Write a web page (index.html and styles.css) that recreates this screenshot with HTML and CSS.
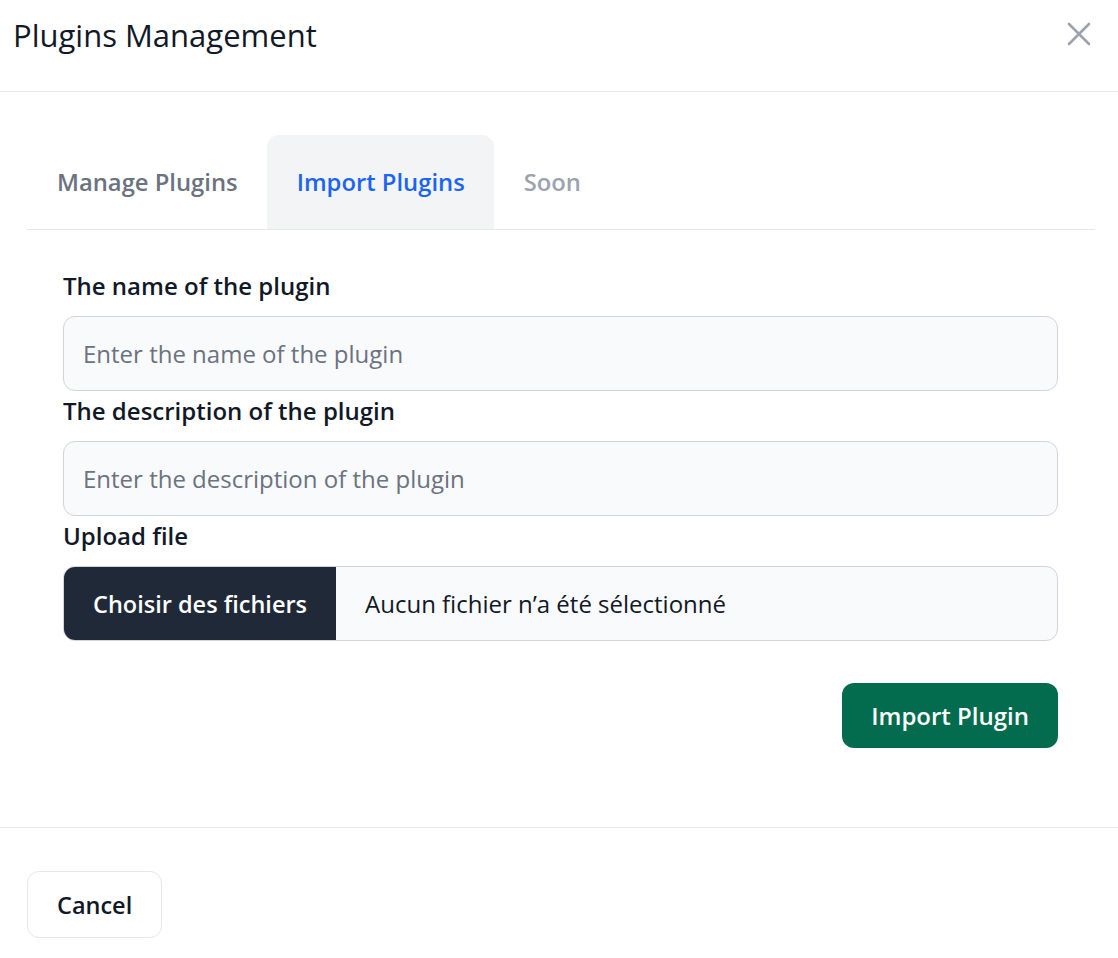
FILE: index.html
```html
<!DOCTYPE html>
<html lang="en">
<head>
<meta charset="utf-8">
<title>Plugins Management</title>
<link rel="stylesheet" href="styles.css">
</head>
<body>
<div class="modal">
  <div class="modal-header">
    <h3 class="modal-title">Plugins Management</h3>
    <button class="close-btn" type="button" aria-label="Close">
      <svg width="24" height="24" viewBox="0 0 24 24" fill="none" stroke="currentColor" stroke-width="2.6" stroke-linecap="round"><path d="M2 2 L22 22 M22 2 L2 22"/></svg>
    </button>
  </div>
  <div class="modal-body">
    <ul class="tabs">
      <li class="tab">Manage Plugins</li>
      <li class="tab active">Import Plugins</li>
      <li class="tab disabled">Soon</li>
    </ul>
    <form class="form">
      <label class="label">The name of the plugin</label>
      <input class="input" type="text" placeholder="Enter the name of the plugin">
      <label class="label">The description of the plugin</label>
      <input class="input" type="text" placeholder="Enter the description of the plugin">
      <label class="label">Upload file</label>
      <div class="file-input">
        <span class="file-btn">Choisir des fichiers</span>
        <span class="file-name">Aucun fichier n’a été sélectionné</span>
      </div>
      <div class="actions">
        <button class="btn-primary" type="button">Import Plugin</button>
      </div>
    </form>
  </div>
  <div class="modal-footer">
    <button class="btn-cancel" type="button">Cancel</button>
  </div>
</div>
</body>
</html>
```
FILE: styles.css
```css
* { box-sizing: border-box; }
html, body { margin: 0; padding: 0; background: #ffffff; }
body {
  font-family: "Open Sans", "Noto Sans", sans-serif;
  color: #111827;
}
.modal { width: 1118px; }
.modal-header {
  height: 92px;
  border-bottom: 1px solid #e5e7eb;
  display: flex;
  justify-content: space-between;
  align-items: flex-start;
  padding: 14px 27px 0 13px;
}
.modal-title {
  margin: 0;
  font-size: 31px;
  font-weight: 400;
  line-height: 42px;
  color: #111827;
}
.close-btn {
  background: none;
  border: none;
  padding: 0;
  margin-top: 8px;
  width: 24px;
  height: 24px;
  color: #9ca3af;
  display: flex;
}
.modal-body {
  padding: 43px 23px 0 27px;
}
.tabs {
  list-style: none;
  margin: 0;
  padding: 0;
  display: flex;
  border-bottom: 1px solid #e5e7eb;
}
.tab {
  height: 94px;
  padding: 0 29px 0 30px;
  display: flex;
  align-items: center;
  font-size: 23.8px;
  font-weight: 600;
  color: #6b7280;
  border-radius: 12px 12px 0 0;
}
.tab.active {
  background: #f3f4f6;
  color: #1c64f2;
}
.tab.disabled { color: #9ca3af; }
.form {
  display: flex;
  flex-direction: column;
  padding: 41px 37px 0 36px;
}
.label {
  font-size: 24px;
  font-weight: 600;
  line-height: 30px;
  color: #111827;
  margin-bottom: 15px;
}
.input {
  height: 75px;
  border: 1px solid #d1d5db;
  border-radius: 12px;
  background: #f9fafb;
  padding: 0 19px;
  font-family: inherit;
  font-size: 24px;
  color: #111827;
  margin-bottom: 5px;
  outline: none;
}
.input::placeholder { color: #6b7280; }
.file-input {
  height: 75px;
  border: 1px solid #d1d5db;
  border-radius: 12px;
  background: #f9fafb;
  display: flex;
  align-items: stretch;
  overflow: hidden;
}
.file-btn {
  background: #1f2937;
  color: #ffffff;
  font-size: 23.5px;
  font-weight: 600;
  display: flex;
  align-items: center;
  padding: 0 29px;
}
.file-name {
  display: flex;
  align-items: center;
  padding-left: 29px;
  font-size: 24px;
  color: #111827;
}
.actions {
  display: flex;
  justify-content: flex-end;
  margin-top: 42px;
}
.btn-primary {
  height: 65px;
  padding: 0 29px;
  border: none;
  border-radius: 12px;
  background: #046c4e;
  color: #ffffff;
  font-family: inherit;
  font-size: 24px;
  font-weight: 600;
}
.modal-footer {
  margin-top: 79px;
  border-top: 1px solid #e5e7eb;
  padding: 43px 27px 20px;
}
.btn-cancel {
  height: 67px;
  padding: 0 29px;
  border: 1px solid #e5e7eb;
  border-radius: 12px;
  background: #ffffff;
  color: #111827;
  font-family: inherit;
  font-size: 23.5px;
  font-weight: 600;
}
```
